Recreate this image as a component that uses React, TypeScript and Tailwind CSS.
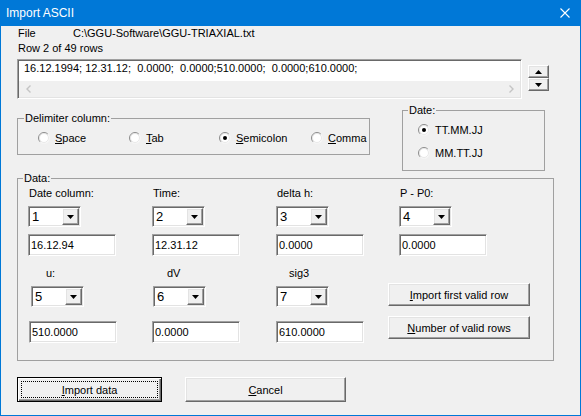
import React from "react";

const FONT = "font-['Liberation_Sans',Arial,sans-serif]";

// classic 3D frames
const SUNKEN =
  "border border-t-[#a0a0a0] border-l-[#a0a0a0] border-b-white border-r-white shadow-[inset_1px_1px_0_#696969,inset_-1px_-1px_0_#e3e3e3]";
const RAISED =
  "border border-t-white border-l-white border-b-[#696969] border-r-[#696969] shadow-[inset_-1px_-1px_0_#a0a0a0,inset_1px_1px_0_#e3e3e3] bg-[#f0f0f0]";

function DownTri() {
  return (
    <svg width="7" height="4" viewBox="0 0 7 4" aria-hidden="true">
      <polygon points="0,0 7,0 3.5,4" fill="#000" />
    </svg>
  );
}

function UpTri() {
  return (
    <svg width="7" height="4" viewBox="0 0 7 4" aria-hidden="true">
      <polygon points="0,4 7,4 3.5,0" fill="#000" />
    </svg>
  );
}

function Radio({ checked }: { checked?: boolean }) {
  return (
    <svg width="12" height="12" viewBox="0 0 12 12" className="shrink-0" aria-hidden="true">
      <defs>
        <linearGradient id="rg" x1="0" y1="0" x2="1" y2="1">
          <stop offset="0.45" stopColor="#8a8a8a" />
          <stop offset="0.55" stopColor="#f4f4f4" />
        </linearGradient>
      </defs>
      <circle cx="6" cy="6" r="5.5" fill="#fff" stroke="url(#rg)" strokeWidth="1" />
      <circle cx="6" cy="6" r="4.5" fill="none" stroke="#d8d8d8" strokeWidth="0.6" />
      {checked && <circle cx="6" cy="6" r="2" fill="#000" />}
    </svg>
  );
}

function RadioItem({ checked, children, w }: { checked?: boolean; children: React.ReactNode; w?: string }) {
  return (
    <div className={`flex items-center gap-[5px] h-[16px] ${w ?? ""}`}>
      <Radio checked={checked} />
      <span className="leading-[14px]">{children}</span>
    </div>
  );
}

function Combo({ value, className = "" }: { value: string; className?: string }) {
  return (
    <div className={`${SUNKEN} bg-white w-[53px] h-[21px] flex items-stretch p-[1px] ${className}`}>
      <span className="flex-1 pl-[2px] text-[13px] leading-[17px]">{value}</span>
      <span className={`${RAISED} w-[17px] flex items-center justify-center`}>
        <DownTri />
      </span>
    </div>
  );
}

function Edit({ value, className = "" }: { value: string; className?: string }) {
  return (
    <div className={`${SUNKEN} bg-white w-[88px] h-[22px] flex items-center pl-[2px] ${className}`}>
      <span className="leading-[14px]">{value}</span>
    </div>
  );
}

function Field({ label, value, combo, w = "w-[124px]" }: { label: string; value: string; combo: string; w?: string }) {
  return (
    <div className={`flex flex-col shrink-0 ${w}`}>
      <div className="mt-[1px] h-[14px] leading-[14px] pl-[1px]">{label}</div>
      <Combo value={combo} className="mt-[6px]" />
      <Edit value={value} className="mt-[7px]" />
    </div>
  );
}

function Field2({
  label,
  value,
  combo,
  w,
  lp,
  cm,
  em,
}: {
  label: string;
  value: string;
  combo: string;
  w: string;
  lp: string;
  cm: string;
  em: string;
}) {
  return (
    <div className={`flex flex-col shrink-0 ${w}`}>
      <div className={`mt-[10px] h-[14px] leading-[14px] ${lp}`}>{label}</div>
      <Combo value={combo} className={`mt-[6px] ${cm}`} />
      <Edit value={value} className={`mt-[14px] ${em}`} />
    </div>
  );
}

function Legend({ children, ml }: { children: React.ReactNode; ml: string }) {
  return <legend className={`px-[1px] leading-[14px] h-[14px] ${ml}`}>{children}</legend>;
}

export default function App() {
  return (
    <div className={`w-[581px] h-[416px] bg-[#0078d7] flex flex-col px-[1px] pb-[1px] text-[11px] text-black ${FONT}`}>
      {/* ── Title bar ── */}
      <div className="h-[26px] shrink-0 flex items-center justify-between pl-[5px] pr-[10px]">
        <span className="text-white text-[12px] leading-[14px]">Import ASCII</span>
        <svg width="10" height="10" viewBox="0 0 10 10" aria-hidden="true">
          <path d="M0.5 0.5 L9.5 9.5 M9.5 0.5 L0.5 9.5" stroke="#fff" strokeWidth="1.1" />
        </svg>
      </div>

      {/* ── Dialog body ── */}
      <div className="flex-1 bg-[#f0f0f0] pl-[16px] flex flex-col">
        <div className="h-[15px] leading-[15px] flex pl-[1px]">
          <span className="w-[55px]">File</span>
          <span>C:\GGU-Software\GGU-TRIAXIAL.txt</span>
        </div>
        <div className="h-[15px] leading-[15px] pl-[1px]">Row 2 of 49 rows</div>

        {/* preview line + spin */}
        <div className="mt-[3px] flex items-start">
          <div className={`${SUNKEN} w-[505px] h-[40px] flex flex-col p-[1px]`}>
            <div className="h-[20px] bg-white pl-[5px] leading-[14px] whitespace-pre">
              16.12.1994; 12.31.12;  0.0000;  0.0000;510.0000;  0.0000;610.0000;
            </div>
            <div className="h-[16px] bg-[#f0f0f0] flex items-center justify-between pl-[7px] pr-[6px]">
              <svg width="5" height="8" viewBox="0 0 5 8" aria-hidden="true">
                <polyline points="4.5,0.5 1,4 4.5,7.5" fill="none" stroke="#c4c4c4" strokeWidth="1.4" />
              </svg>
              <svg width="5" height="8" viewBox="0 0 5 8" aria-hidden="true">
                <polyline points="0.5,0.5 4,4 0.5,7.5" fill="none" stroke="#c4c4c4" strokeWidth="1.4" />
              </svg>
            </div>
          </div>
          <div className="ml-[6px] mt-[6px] w-[21px] flex flex-col">
            <div className={`${RAISED} h-[13px] flex items-center justify-center`}>
              <UpTri />
            </div>
            <div className={`${RAISED} h-[13px] flex items-center justify-center`}>
              <DownTri />
            </div>
          </div>
        </div>

        {/* delimiter + date */}
        <div className="flex items-start mt-[4px]">
          <fieldset className="mt-[8px] w-[353px] h-[44px] border border-[#a0a0a0]">
            <Legend ml="ml-[6px]">Delimiter column:</Legend>
            <div className="flex pl-[20px] mt-[5px]">
              <RadioItem w="w-[91px]">
                <u>S</u>pace
              </RadioItem>
              <RadioItem w="w-[90px]">
                <u>T</u>ab
              </RadioItem>
              <RadioItem checked w="w-[92px]">
                <u>S</u>emicolon
              </RadioItem>
              <RadioItem>
                <u>C</u>omma
              </RadioItem>
            </div>
          </fieldset>
          <fieldset className="ml-[32px] w-[143px] h-[68px] border border-[#a0a0a0]">
            <Legend ml="ml-[5px]">Date:</Legend>
            <div className="flex flex-col pl-[15px] mt-[5px] gap-[7px]">
              <RadioItem checked>TT.MM.JJ</RadioItem>
              <RadioItem>MM.TT.JJ</RadioItem>
            </div>
          </fieldset>
        </div>

        {/* data */}
        <fieldset className="w-[537px] h-[190px] border border-[#a0a0a0]">
          <Legend ml="ml-[5px]">Data:</Legend>
          <div className="pl-[10px] flex flex-col">
            <div className="flex">
              <Field label="Date column:" combo="1" value="16.12.94" />
              <Field label="Time:" combo="2" value="12.31.12" />
              <Field label="delta h:" combo="3" value="0.0000" w="w-[123px]" />
              <Field label="P - P0:" combo="4" value="0.0000" />
            </div>
            <div className="flex">
              <Field2 label="u:" combo="5" value="510.0000" w="w-[124px]" lp="pl-[18px]" cm="ml-[3px]" em="ml-[1px]" />
              <Field2 label="dV" combo="6" value="0.0000" w="w-[124px]" lp="pl-[15px]" cm="ml-[1px]" em="" />
              <Field2 label="sig3" combo="7" value="610.0000" w="w-[112px]" lp="pl-[13px]" cm="" em="" />
              <div className="flex flex-col mt-[27px]">
                <button className={`${RAISED} w-[142px] h-[23px] leading-[14px]`}>
                  <u>I</u>mport first valid row
                </button>
                <button className={`${RAISED} mt-[10px] w-[142px] h-[23px] leading-[14px]`}>
                  <u>N</u>umber of valid rows
                </button>
              </div>
            </div>
          </div>
        </fieldset>

        {/* bottom buttons */}
        <div className="mt-[16px] flex">
          <button className="w-[145px] h-[25px] border border-black bg-[#f0f0f0] shadow-[inset_1px_1px_0_#fff,inset_-1px_-1px_0_#696969,inset_-2px_-2px_0_#a0a0a0] flex p-[3px]">
            <span className="flex-1 border border-dotted border-black flex items-center justify-center leading-[14px]">
              <u>I</u>mport data
            </span>
          </button>
          <button className={`${RAISED} ml-[23px] w-[161px] h-[25px] leading-[14px]`}>
            <u>C</u>ancel
          </button>
        </div>
      </div>
    </div>
  );
}
